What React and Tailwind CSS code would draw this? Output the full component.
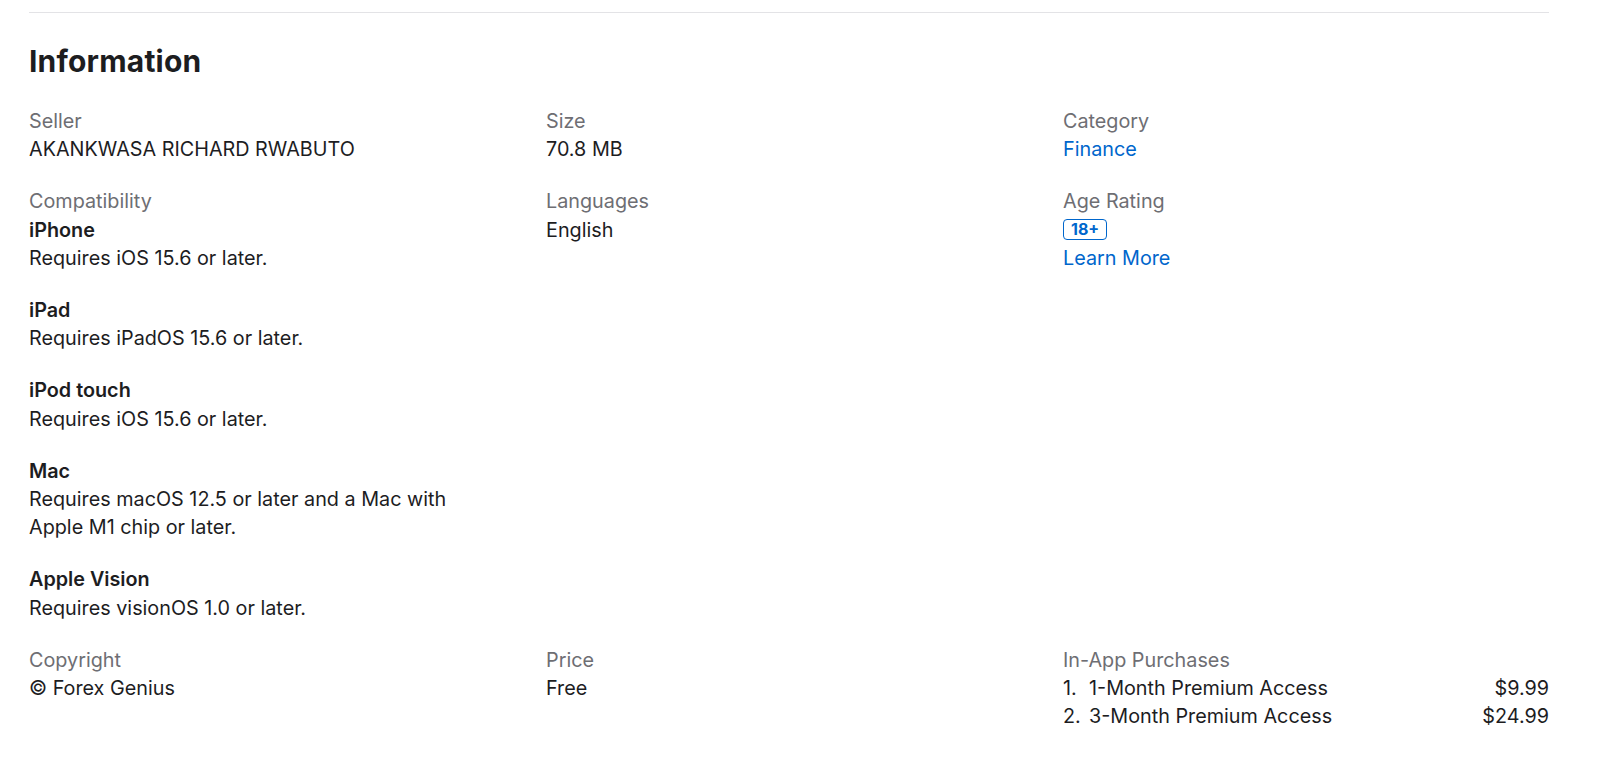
import React from 'react';

const devices = [
  { name: 'iPhone', req: 'Requires iOS 15.6 or later.' },
  { name: 'iPad', req: 'Requires iPadOS 15.6 or later.' },
  { name: 'iPod touch', req: 'Requires iOS 15.6 or later.' },
  { name: 'Mac', req: 'Requires macOS 12.5 or later and a Mac with Apple M1 chip or later.' },
  { name: 'Apple Vision', req: 'Requires visionOS 1.0 or later.' },
];

const purchases = [
  { name: '1-Month Premium Access', price: '$9.99' },
  { name: '3-Month Premium Access', price: '$24.99' },
];

const Label = ({ children }) => <dt className="text-[#6e6e73]">{children}</dt>;

const App = () => {
  return (
    <div
      className="min-h-screen bg-white text-[#1d1d1f] text-[19.8px] leading-[28.2px]"
      style={{ fontFamily: 'Inter, "Noto Sans", sans-serif' }}
    >
      <div className="ml-[29px] w-[1520px] pt-[12px]">
        <div className="border-t border-[#e3e3e6]" />

        <h2 className="mt-[30px] text-[30px] leading-[36px] font-bold tracking-[0.2px]">Information</h2>

        <dl className="mt-[28px] grid grid-cols-3 gap-x-[31px] gap-y-[24px]">
          <div>
            <Label>Seller</Label>
            <dd>AKANKWASA RICHARD RWABUTO</dd>
          </div>
          <div>
            <Label>Size</Label>
            <dd>70.8 MB</dd>
          </div>
          <div>
            <Label>Category</Label>
            <dd>
              <a href="#" className="text-[#0066cc]">Finance</a>
            </dd>
          </div>

          <div>
            <Label>Compatibility</Label>
            <dd className="flex flex-col gap-[24px]">
              {devices.map((d) => (
                <dl key={d.name}>
                  <dt className="font-semibold">{d.name}</dt>
                  <dd className="max-w-[450px]">{d.req}</dd>
                </dl>
              ))}
            </dd>
          </div>
          <div>
            <Label>Languages</Label>
            <dd>English</dd>
          </div>
          <div>
            <Label>Age Rating</Label>
            <dd>
              <span className="inline-flex items-center justify-center h-[21px] px-[7px] mt-[3px] mb-[4px] align-top border border-[#0066cc] rounded-[4px] text-[#0066cc] text-[16px] leading-none font-bold">
                18+
              </span>
            </dd>
            <dd>
              <a href="#" className="text-[#0066cc]">Learn More</a>
            </dd>
          </div>

          <div>
            <Label>Copyright</Label>
            <dd>© Forex Genius</dd>
          </div>
          <div>
            <Label>Price</Label>
            <dd>Free</dd>
          </div>
          <div>
            <Label>In-App Purchases</Label>
            <dd>
              <ol>
                {purchases.map((p, i) => (
                  <li key={p.name} className="flex justify-between">
                    <span className="flex">
                      <span className="w-[26px]">{i + 1}.</span>
                      <span>{p.name}</span>
                    </span>
                    <span>{p.price}</span>
                  </li>
                ))}
              </ol>
            </dd>
          </div>
        </dl>
      </div>
    </div>
  );
};

export default App;
